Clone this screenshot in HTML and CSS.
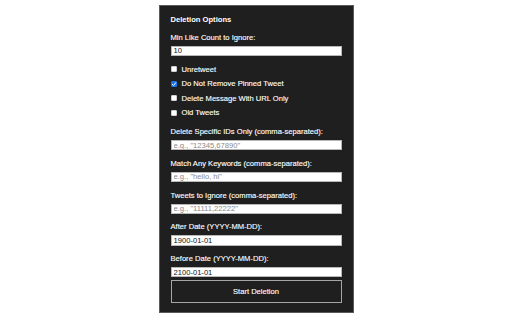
FILE: index.html
```html
<!DOCTYPE html>
<html>
<head>
<meta charset="utf-8">
<link rel="stylesheet" href="styles.css">
</head>
<body>
<div class="panel">
  <div class="title">Deletion Options</div>
  <div class="field first">
    <label class="label">Min Like Count to Ignore:</label>
    <input class="input" type="text" value="10">
  </div>
  <div class="checks">
    <label class="check"><span class="box"></span><span>Unretweet</span></label>
    <label class="check"><span class="box checked"><svg viewBox="0 0 6 6" width="6" height="6"><path d="M1.1 3.1 L2.5 4.5 L4.9 1.5" fill="none" stroke="#ffffff" stroke-width="1"/></svg></span><span>Do Not Remove Pinned Tweet</span></label>
    <label class="check"><span class="box"></span><span>Delete Message With URL Only</span></label>
    <label class="check"><span class="box"></span><span>Old Tweets</span></label>
  </div>
  <div class="field">
    <label class="label">Delete Specific IDs Only (comma-separated):</label>
    <input class="input" type="text" placeholder="e.g., &quot;12345,67890&quot;">
  </div>
  <div class="field">
    <label class="label">Match Any Keywords (comma-separated):</label>
    <input class="input" type="text" placeholder="e.g., &quot;hello, hi&quot;">
  </div>
  <div class="field">
    <label class="label">Tweets to Ignore (comma-separated):</label>
    <input class="input" type="text" placeholder="e.g., &quot;11111,22222&quot;">
  </div>
  <div class="field">
    <label class="label">After Date (YYYY-MM-DD):</label>
    <input class="input" type="text" value="1900-01-01">
  </div>
  <div class="field">
    <label class="label">Before Date (YYYY-MM-DD):</label>
    <input class="input" type="text" value="2100-01-01">
  </div>
  <button class="start">Start Deletion</button>
</div>
</body>
</html>
```
FILE: styles.css
```css
html, body {
  margin: 0;
  padding: 0;
  background: #ffffff;
}
body {
  font-family: "Liberation Sans", Arial, sans-serif;
  font-size: 7.6px;
  padding-top: 5px;
}
.panel {
  box-sizing: border-box;
  width: 195px;
  height: 308px;
  margin: 0 auto;
  background: #1f1f1f;
  border: 1px solid #5a5a5a;
  padding: 9px 11px 9px 11px;
  color: #ffffff;
  display: flex;
  flex-direction: column;
}
.title {
  font-weight: bold;
  line-height: 10px;
  height: 10px;
}
.field {
  display: flex;
  flex-direction: column;
  margin-top: 8.5px;
}
.field.first {
  margin-top: 7.5px;
}
.label {
  line-height: 10px;
  height: 10px;
  margin-bottom: 3px;
  color: #ffffff;
  -webkit-text-stroke: 0.12px #ffffff;
}
.input {
  box-sizing: border-box;
  width: 100%;
  height: 10.3px;
  margin: 0;
  padding: 0 2px;
  border: 1px solid #b8b8b8;
  border-radius: 0;
  background: #ffffff;
  font-family: "Liberation Sans", Arial, sans-serif;
  font-size: 7.6px;
  line-height: 8px;
  color: #111111;
  outline: none;
}
.input::placeholder {
  color: #8a8a8a;
}
.checks {
  display: flex;
  flex-direction: column;
  margin-top: 6.2px;
  margin-bottom: -1.5px;
}
.check {
  display: flex;
  align-items: center;
  height: 14.5px;
  color: #ffffff;
  -webkit-text-stroke: 0.12px #ffffff;
}
.box {
  box-sizing: border-box;
  width: 6px;
  height: 6px;
  margin: 0 4.5px 0 0.5px;
  background: #ffffff;
  border: 0.5px solid #cfcfcf;
  border-radius: 1px;
  display: flex;
  align-items: center;
  justify-content: center;
  flex: none;
}
.box.checked {
  background: #1a73e8;
  border-color: #1a73e8;
}
.box svg {
  display: block;
  flex: none;
}
.start {
  box-sizing: border-box;
  margin-top: 3px;
  width: 100%;
  height: 23px;
  background: #1f1f1f;
  border: 1px solid #a6a6a6;
  border-radius: 0;
  color: #ffffff;
  font-family: "Liberation Sans", Arial, sans-serif;
  font-size: 7.6px;
  padding: 0;
  -webkit-text-stroke: 0.12px #ffffff;
}
```
